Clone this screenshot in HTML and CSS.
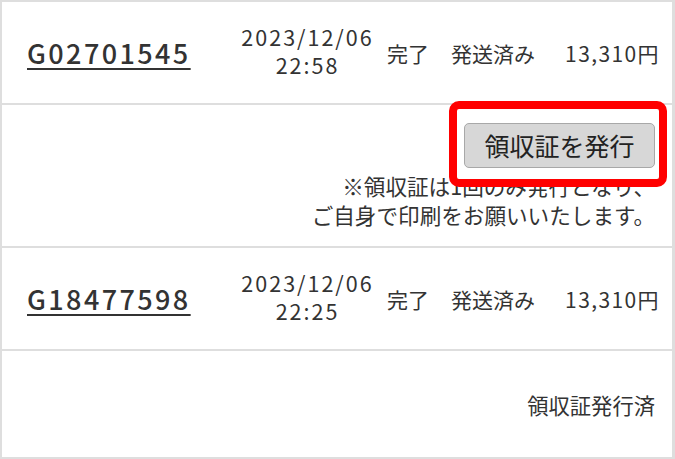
FILE: index.html
```html
<!DOCTYPE html>
<html lang="ja">
<head>
<meta charset="utf-8">
<link rel="stylesheet" href="styles.css">
</head>
<body>
<div class="orders">
  <div class="order-row">
    <a class="order-no" href="#">G02701545</a>
    <div class="date">2023/12/06<br>22:58</div>
    <div class="status">完了</div>
    <div class="ship">発送済み</div>
    <div class="price">13,310円</div>
  </div>
  <div class="receipt-row">
    <div class="highlight"></div>
    <button class="issue-btn" type="button">領収証を発行</button>
    <p class="note">※領収証は1回のみ発行となり、<br>ご自身で印刷をお願いいたします。</p>
  </div>
  <div class="order-row">
    <a class="order-no" href="#">G18477598</a>
    <div class="date">2023/12/06<br>22:25</div>
    <div class="status">完了</div>
    <div class="ship">発送済み</div>
    <div class="price">13,310円</div>
  </div>
  <div class="receipt-row done">
    <span class="issued">領収証発行済</span>
  </div>
</div>
</body>
</html>
```
FILE: styles.css
```css
* { box-sizing: border-box; }
html, body { margin: 0; padding: 0; background: #fff; }
body {
  font-family: "Noto Sans CJK JP", "Noto Sans", sans-serif;
  color: #333;
  font-size: 21px;
}
.orders {
  width: 675px;
  height: 459px;
  border-style: solid;
  border-color: #dedede;
  border-width: 2px 3px 2px 2px;
  display: flex;
  flex-direction: column;
  overflow: hidden;
}
.order-row {
  height: 103px;
  flex: none;
  display: grid;
  grid-template-columns: 214px 146px 64px 1fr auto;
  align-items: center;
  padding: 0 12px 0 25px;
  border-bottom: 2px solid #dedede;
}
.order-no {
  color: #333;
  font-size: 27px;
  font-weight: 500;
  letter-spacing: 2.4px;
  text-decoration: underline;
  text-decoration-thickness: 2px;
  text-underline-offset: 4px;
}
.date {
  justify-self: start;
  width: 135px;
  margin-left: -1px;
  text-align: center;
  line-height: 28px;
  font-size: 21.5px;
  letter-spacing: 2px;
  margin-top: -3px;
}
.price { letter-spacing: 1.4px; }
.receipt-row {
  position: relative;
  flex: none;
  height: 143px;
  display: flex;
  flex-direction: column;
  align-items: flex-end;
  padding: 18px 17px 0 0;
  border-bottom: 2px solid #dedede;
}
.issue-btn {
  position: relative;
  z-index: 2;
  width: 191px;
  height: 45px;
  margin: 0;
  padding: 0;
  font-family: inherit;
  font-size: 25px;
  line-height: 1;
  color: #222;
  background: #d7d7d7;
  border: 1px solid #a8a8a8;
  border-radius: 5px;
}
.note {
  margin: 3px 0 0;
  text-align: right;
  line-height: 29px;
  font-size: 21.6px;
}
.highlight {
  position: absolute;
  z-index: 1;
  top: -4px;
  right: 5px;
  width: 218px;
  height: 86px;
  border: 8px solid #ff0000;
  border-radius: 10px;
  background: #fff;
}
.receipt-row.done {
  flex: 1;
  border-bottom: 0;
  justify-content: center;
  padding: 0 17px 0 0;
}
.issued { font-size: 21.3px; }
```
